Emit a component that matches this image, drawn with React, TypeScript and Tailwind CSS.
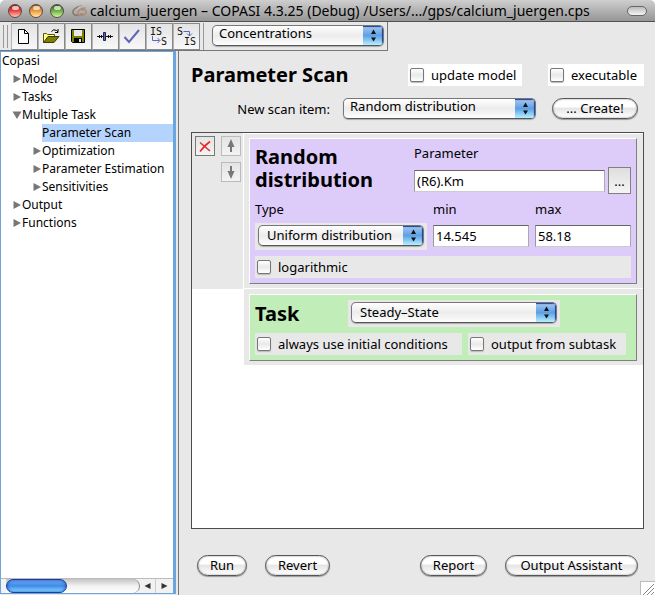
import type { ReactNode } from "react";

const noop = () => {};

function Select({
  id,
  label,
  value,
  className = "",
  raised = false,
}: {
  id: string;
  label: string;
  value: string;
  className?: string;
  raised?: boolean;
}) {
  return (
    <div
      className={`relative h-[21px] overflow-hidden rounded-[5px] border border-t-[#777] border-x-[#777] border-b-[#555] bg-linear-to-b from-white via-[#ececec] to-[#fdfdfd] shadow-[0_1px_1px_#aaa] ${className}`}
    >
      <select
        id={id}
        aria-label={label}
        defaultValue={value}
        className={`block w-full appearance-none bg-transparent outline-none ${
          raised ? "h-[15px] pl-[6px] leading-[15px]" : "h-[19px] pl-[8px] leading-[19px]"
        }`}
      >
        <option>{value}</option>
      </select>
      <span className="pointer-events-none absolute inset-y-0 right-0 flex w-5 items-center justify-center bg-linear-to-b from-[#a9c8ee] via-[#5d9fe4] to-[#b5f0ff] shadow-[inset_-1px_1px_1px_#1d3f9a]">
        <svg width="7" height="13" viewBox="0 0 7 13" fill="#111">
          <path d="M3.5 0.5 6 5H1zM3.5 12.5 6 8.500H1z" />
        </svg>
      </span>
    </div>
  );
}

function Check({ label, className = "" }: { label: string; className?: string }) {
  return (
    <label className={`flex h-[22px] items-center gap-[7px] pl-[2px] whitespace-nowrap ${className}`}>
      <input
        type="checkbox"
        className="size-[14px] shrink-0 appearance-none rounded-[2px] border border-[#777] bg-linear-to-b from-white via-[#e9e9e9] to-white shadow-[0_1px_1px_#bbb]"
      />
      {label}
    </label>
  );
}

function PillButton({ children, className = "" }: { children: ReactNode; className?: string }) {
  return (
    <button
      type="button"
      className={`flex h-[21px] shrink-0 items-center justify-center rounded-full border border-[#555] bg-linear-to-b from-white from-40% via-[#e6e6e6] via-50% to-white pb-[2px] whitespace-nowrap shadow-[0_1px_1px_#999,inset_0_0_2px_#888] ${className}`}
    >
      {children}
    </button>
  );
}

function TextBox({ id, value, className = "" }: { id: string; value: string; className?: string }) {
  return (
    <input
      id={id}
      type="text"
      defaultValue={value}
      className={`h-[22px] min-w-0 border border-t-[#666] border-r-[#aaa] border-b-[#ccc] border-l-[#999] bg-white px-[2px] outline-none ${className}`}
    />
  );
}

function ToolButton({ label, children }: { label: string; children: ReactNode }) {
  return (
    <button
      type="button"
      aria-label={label}
      className="flex h-[27px] w-[27px] items-center justify-center border border-[#888] border-l-[#b5b5b5] bg-linear-to-b from-[#e3e3e3] to-[#f8f8f8]"
    >
      <svg width="25" height="25" viewBox="0 0 25 25" fill="none">
        {children}
      </svg>
    </button>
  );
}

function MiniButton({ label, className = "", children }: { label: string; className?: string; children: ReactNode }) {
  return (
    <button
      type="button"
      aria-label={label}
      className={`size-5 border bg-linear-to-b from-[#e4e4e4] to-[#f3f3f3] ${className}`}
    >
      <svg width="18" height="18" viewBox="0 0 18 18" fill="none">
        {children}
      </svg>
    </button>
  );
}

const tree = [
  { name: "Copasi", level: 0, state: "none" },
  { name: "Model", level: 1, state: "closed" },
  { name: "Tasks", level: 1, state: "closed" },
  { name: "Multiple Task", level: 1, state: "open" },
  { name: "Parameter Scan", level: 2, state: "leaf" },
  { name: "Optimization", level: 2, state: "closed" },
  { name: "Parameter Estimation", level: 2, state: "closed" },
  { name: "Sensitivities", level: 2, state: "closed" },
  { name: "Output", level: 1, state: "closed" },
  { name: "Functions", level: 1, state: "closed" },
];

const indent = ["pl-[1px]", "pl-[11px]", "pl-[31px]"];

const lights = [
  { name: "Close", tone: "from-[#8d1a1a] via-[#ee4444] to-[#ffc0b8]" },
  { name: "Minimize", tone: "from-[#96551a] via-[#f39a3a] to-[#ffeda0]" },
  { name: "Zoom", tone: "from-[#2d611b] via-[#6db53f] to-[#d5f5a0]" },
];

function TitleBar() {
  return (
    <header className="flex h-[22px] shrink-0 items-center rounded-t-[5px] border-b border-[#515151] bg-linear-to-b from-[#cfcfcf] to-[#969696] pr-2 pl-[8px]">
      <div className="flex gap-[7px]">
        {lights.map((l) => (
          <button
            key={l.name}
            type="button"
            aria-label={l.name}
            className={`flex size-[14px] justify-center rounded-full border border-[#5a4a44] bg-linear-to-b ${l.tone}`}
          >
            <span className="mt-px h-[4px] w-[7px] rounded-full bg-white/70" />
          </button>
        ))}
      </div>
      <svg className="ml-[7px] shrink-0" width="17" height="16" viewBox="0 0 17 16" fill="none" strokeLinecap="round">
        <path d="M10 3C5 4 1 7 2 10c1 3 6 3 9 1" stroke="#8b7a70" strokeWidth="1.600" />
        <path d="M14 5C10 5 6 8 7 11c1 2 6 2 8-1 1-2-1-4-4-3" stroke="#b08a74" strokeWidth="1.600" />
        <path d="M10 3 7 5" stroke="#dcc" strokeWidth="1" />
      </svg>
      <h1 className="ml-[2px] flex-1 truncate text-[14px] leading-[20px]">
        calcium_juergen – COPASI 4.3.25 (Debug) /Users/.../gps/calcium_juergen.cps
      </h1>
      <button
        type="button"
        aria-label="Toggle toolbar"
        className="h-[10px] w-5 rounded-full border border-[#666] bg-linear-to-b from-[#bbb] to-[#f4f4f4]"
      />
    </header>
  );
}

function ToolBar() {
  return (
    <div className="flex h-[29px] w-[388px] shrink-0 border-r border-b border-[#777] pt-px">
      <div className="mx-[3px] my-[2px] w-[5px] border-x border-[#999]" />
      <div className="flex">
        <ToolButton label="New">
          <path d="M6.500 5.500h6l4 4v10h-10z" fill="#fff" stroke="#000" />
          <path d="M12.500 5.500v4h4" stroke="#000" />
        </ToolButton>
        <ToolButton label="Open">
          <path d="M4.500 18.500v-9h3l1 1h7v2" fill="#ffff8c" stroke="#55550a" />
          <path d="M4.500 18.500 9 12.500h11l-5 6z" fill="#808000" stroke="#3a3a00" />
          <path d="M12.500 7.500q2-3 5-1l1.500 1.500M19 5v3.500h-3" stroke="#000" />
        </ToolButton>
        <ToolButton label="Save">
          <path d="M5.500 5.500h13v13h-12l-1-1z" fill="#808000" stroke="#000" />
          <path d="M8 6h8v6H8z" fill="#e8e8e8" />
          <path d="M8 14h8v4H8z" fill="#000" />
          <path d="M13 15h2v3h-2z" fill="#ddd" />
        </ToolButton>
        <ToolButton label="Slider">
          <path d="M4 12.500h16M6.500 11v3M8.500 11v3M15.500 11v3M17.500 11v3" stroke="#111" />
          <path d="M10.500 8.500h2v8h-2z" fill="#6468b4" stroke="#222255" />
        </ToolButton>
        <ToolButton label="Check">
          <path d="m4.500 13 4.500 5L19 6" stroke="#6064b8" strokeWidth="2" />
        </ToolButton>
        <ToolButton label="Convert to reversible">
          <text x="3" y="11" fontSize="10" fontFamily="DejaVu Sans Mono" fill="#111">IS</text>
          <text x="14" y="21" fontSize="10" fontFamily="DejaVu Sans Mono" fill="#111">S</text>
          <path d="M5.500 12v4.500h7M10.500 14l2.500 2.500-2.500 2.500" stroke="#6064b8" />
        </ToolButton>
        <ToolButton label="Convert to irreversible">
          <text x="3" y="11" fontSize="10" fontFamily="DejaVu Sans Mono" fill="#111">S</text>
          <text x="10" y="21" fontSize="10" fontFamily="DejaVu Sans Mono" fill="#111">IS</text>
          <path d="M9.500 7.500h6V12M13 9.500l2.500 2.500L18 9.500" stroke="#6064b8" />
        </ToolButton>
      </div>
      <div className="ml-[3px] flex flex-1 border-l border-[#999] pt-[2px] pr-[3px] pl-2">
        <Select id="units" label="Units" value="Concentrations" className="flex-1" raised />
      </div>
    </div>
  );
}

function Tree() {
  return (
    <nav className="mb-px flex w-[176px] shrink-0 flex-col border border-r-[3px] border-[#6aa5e0] bg-white text-[12px]">
      <ul className="flex-1">
        {tree.map((n) => (
          <li key={n.name} className={`flex h-[18px] items-center ${indent[n.level]}`}>
            {n.level > 0 && (
              <svg className="shrink-0" width="10" height="10" viewBox="0 0 10 10" fill="#777">
                {n.state === "closed" && <path d="M1.500 1v8L9 5z" />}
                {n.state === "open" && <path d="M0.500 1.500h9L5 9z" />}
              </svg>
            )}
            <button
              type="button"
              className={`h-[18px] flex-1 text-left leading-[18px] whitespace-nowrap ${
                n.state === "leaf" ? "bg-[#b4d3fd]" : ""
              }`}
            >
              {n.name}
            </button>
          </li>
        ))}
      </ul>
      <div className="flex h-[15px] shrink-0 border-t border-[#bbb] bg-[#f2f2f2]">
        <div className="ml-[5px] flex-1 rounded-r-full border-r border-[#888] bg-linear-to-b from-[#c4c4c4] via-[#f2f2f2] to-white">
          <div className="h-[14px] w-[61px] rounded-full border border-[#1c3f9c] bg-linear-to-b from-[#6ea6ef] via-[#3f8bea] to-[#8fe0ff] shadow-[inset_0_0_3px_#1746b5]" />
        </div>
        <button type="button" aria-label="Scroll left" className="flex w-4 items-center justify-center border-r border-[#ccc]">
          <svg width="7" height="8" viewBox="0 0 7 8" fill="#333">
            <path d="M6.500 1v6L0.500 4z" />
          </svg>
        </button>
        <button type="button" aria-label="Scroll right" className="mr-px flex w-4 items-center justify-center">
          <svg width="7" height="8" viewBox="0 0 7 8" fill="#333">
            <path d="M0.500 1v6L6.500 4z" />
          </svg>
        </button>
      </div>
    </nav>
  );
}

function ScanItem() {
  return (
    <div className="flex">
      <div className="flex w-[51px] shrink-0 items-start gap-[6px] bg-[#e8e8e8] pt-[3px] pl-[3px]">
        <MiniButton label="Remove" className="border-[#777]">
          <path d="M4 5.500 14 14" stroke="#d33" strokeWidth="1.600" />
          <path d="M14 4.500Q9 8 4 14.500" stroke="#e22" strokeWidth="1.600" />
        </MiniButton>
        <div className="flex flex-col gap-[6px]">
          <MiniButton label="Move up" className="border-[#bbb]">
            <path d="M9 2 12.500 10h-7zM8 9h2v6H8z" fill="#777" />
          </MiniButton>
          <MiniButton label="Move down" className="border-[#bbb]">
            <path d="M9 16 5.500 8h7zM8 3h2v6H8z" fill="#777" />
          </MiniButton>
        </div>
      </div>
      <div className="flex-1 border-y border-l border-white bg-[#e8e8e8] py-1 pr-[6px] pl-[5px]">
        <section className="border border-t-white border-r-[#808080] border-b-[#808080] border-l-white bg-[#ddcbf9] p-[5px]">
          <div className="flex">
            <h3 className="w-[159px] shrink-0 pt-px text-[20px] leading-[23px] font-bold">Random distribution</h3>
            <div className="flex-1">
              <label htmlFor="param" className="block h-[23px] leading-[19px]">Parameter</label>
              <div className="flex items-center gap-[3px]">
                <TextBox id="param" value="(R6).Km" className="flex-1" />
                <button
                  type="button"
                  className="h-[27px] w-[23px] border border-[#808080] bg-linear-to-b from-[#dedede] to-[#f5f5f5]"
                >
                  ...
                </button>
              </div>
            </div>
          </div>
          <div className="mt-[6px] grid grid-cols-[172px_1fr_1fr] gap-x-[6px]">
            <label htmlFor="type" className="h-[23px] leading-[19px]">Type</label>
            <label htmlFor="min" className="h-[23px] leading-[19px]">min</label>
            <label htmlFor="max" className="h-[23px] leading-[19px]">max</label>
            <div className="h-[27px] bg-[#e8e8e8] px-[3px] pt-[2px]">
              <Select id="type" label="Type" value="Uniform distribution" />
            </div>
            <TextBox id="min" value="14.545" className="mt-[2px]" />
            <TextBox id="max" value="58.18" className="mt-[2px]" />
          </div>
          <Check label="logarithmic" className="mt-[6px] bg-[#e8e8e8]" />
        </section>
      </div>
    </div>
  );
}

function TaskItem() {
  return (
    <div className="ml-[52px] bg-[#e8e8e8] pt-[5px] pr-[6px] pb-1 pl-[5px]">
      <section className="border border-t-white border-r-[#808080] border-b-[#808080] border-l-white bg-[#c1edb8] p-[5px]">
        <div className="flex">
          <h3 className="w-[93px] shrink-0 text-[20px] leading-[27px] font-bold">Task</h3>
          <div className="h-[27px] w-[212px] bg-[#e8e8e8] px-[3px] pt-[2px]">
            <Select id="task" label="Task" value="Steady–State" />
          </div>
        </div>
        <div className="mt-[6px] flex gap-[6px]">
          <Check label="always use initial conditions" className="w-[207px] bg-[#e8e8e8]" />
          <Check label="output from subtask" className="w-[158px] bg-[#e8e8e8]" />
        </div>
      </section>
    </div>
  );
}

export default function App() {
  return (
    <div className="flex h-screen flex-col bg-white font-['Noto_Sans','Lucida_Grande',sans-serif] text-[13px] leading-[18px] text-black">
      <TitleBar />
      <div className="flex min-h-0 flex-1 flex-col bg-[#e8e8e8]">
        <ToolBar />
        <div className="flex min-h-0 flex-1">
          <Tree />
          <main className="ml-[2px] flex min-w-0 flex-1 flex-col border-l border-[#777] pt-[13px] pl-3">
            <div className="flex h-[22px] items-center pr-[11px]">
              <h2 className="flex-1 text-[20px] leading-[22px] font-bold">Parameter Scan</h2>
              <Check label="update model" className="w-[114px] bg-white" />
              <Check label="executable" className="ml-[26px] w-24 bg-white" />
            </div>
            <form className="mt-3 flex h-[21px] items-center pr-[17px]" onSubmit={noop}>
              <label htmlFor="item" className="flex-1 pr-[13px] text-right">New scan item:</label>
              <Select id="item" label="New scan item" value="Random distribution" className="w-[193px]" raised />
              <PillButton className="ml-4 w-[86px]">... Create!</PillButton>
            </form>
            <div className="mt-[13px] mr-[11px] min-h-0 flex-1 border border-[#4c4c4c] bg-white">
              <ScanItem />
              <TaskItem />
            </div>
            <div className="mt-[26px] flex pr-[17px] pl-[6px]">
              <PillButton className="w-[50px]">Run</PillButton>
              <PillButton className="ml-[18px] w-[65px]">Revert</PillButton>
              <PillButton className="ml-auto w-[67px]">Report</PillButton>
              <PillButton className="ml-[18px] w-[133px]">Output Assistant</PillButton>
            </div>
            <svg
              className="mt-[5px] ml-auto shrink-0 border-t border-l border-[#bbb] bg-white"
              width="15"
              height="14"
              viewBox="0 0 14 13"
              fill="none"
              stroke="#888"
            >
              <path d="M2 13 13 2M6 13l7-7M10 13l3-3" />
            </svg>
          </main>
        </div>
      </div>
    </div>
  );
}
